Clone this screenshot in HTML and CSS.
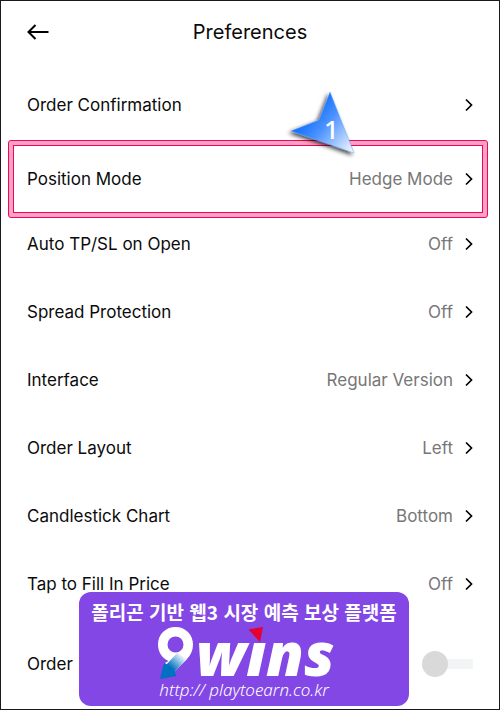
FILE: index.html
```html
<!DOCTYPE html>
<html lang="en">
<head>
<meta charset="utf-8">
<meta name="viewport" content="width=device-width, initial-scale=1">
<title>Preferences</title>
<link rel="stylesheet" href="styles.css">
</head>
<body>
<svg class="defs" aria-hidden="true">
  <symbol id="chevron" viewBox="0 0 8 14"><path d="M1 1.5 6.5 7 1 12.5" fill="none" stroke="#000" stroke-width="1.7"/></symbol>
</svg>
<main class="screen">
  <header class="header">
    <button class="back" type="button" aria-label="Back">
      <svg width="22" height="16" viewBox="0 0 22 16"><path d="M8.500 1 1.500 8 8.500 15M1.500 8H21.500" fill="none" stroke="#000" stroke-width="2"/></svg>
    </button>
    <h1 class="title">Preferences</h1>
  </header>
  <div class="list">
    <button class="row" type="button"><span>Order Confirmation</span><span class="value"></span><svg class="chevron"><use href="#chevron"/></svg></button>
    <div class="highlight">
      <button class="row" type="button"><span>Position Mode</span><span class="value">Hedge Mode</span><svg class="chevron"><use href="#chevron"/></svg></button>
      <svg class="marker" width="76" height="74" viewBox="0 0 76 74" role="img" aria-label="Step 1">
        <defs>
          <linearGradient id="blue" gradientUnits="userSpaceOnUse" x1="24" y1="26" x2="71" y2="67">
            <stop offset="0" stop-color="#0f6cff"/><stop offset=".35" stop-color="#4a92ff"/><stop offset="1" stop-color="#fff"/>
          </linearGradient>
          <filter id="shade" x="-20%" y="-20%" width="140%" height="140%"><feDropShadow dx="-2" dy="2" stdDeviation="2" flood-color="#000" flood-opacity=".75"/></filter>
        </defs>
        <path d="M46 6 70 67 7 45 35 34Z" fill="url(#blue)" stroke="#6aa5f5" stroke-width=".5" filter="url(#shade)"/>
        <text class="marker-text" x="40" y="53">1</text>
      </svg>
    </div>
    <button class="row" type="button"><span>Auto TP/SL on Open</span><span class="value">Off</span><svg class="chevron"><use href="#chevron"/></svg></button>
    <button class="row" type="button"><span>Spread Protection</span><span class="value">Off</span><svg class="chevron"><use href="#chevron"/></svg></button>
    <button class="row" type="button"><span>Interface</span><span class="value">Regular Version</span><svg class="chevron"><use href="#chevron"/></svg></button>
    <button class="row" type="button"><span>Order Layout</span><span class="value">Left</span><svg class="chevron"><use href="#chevron"/></svg></button>
    <button class="row" type="button"><span>Candlestick Chart</span><span class="value">Bottom</span><svg class="chevron"><use href="#chevron"/></svg></button>
    <button class="row" type="button"><span>Tap to Fill In Price</span><span class="value">Off</span><svg class="chevron"><use href="#chevron"/></svg></button>
    <div class="row row-toggle"><label for="order">Order</label><input class="toggle" id="order" type="checkbox"></div>
  </div>
  <a class="banner" href="http://playtoearn.co.kr" lang="ko">
    <span class="banner-title">폴리곤 기반 웹3 시장 예측 보상 플랫폼</span>
    <svg class="logo" width="180" height="56" viewBox="0 0 180 56" role="img" aria-label="9wins">
      <defs>
        <linearGradient id="tail" gradientUnits="userSpaceOnUse" x1="28" y1="29" x2="16" y2="42">
          <stop offset="0" stop-color="#fff"/><stop offset="1" stop-color="#0070c0"/>
        </linearGradient>
      </defs>
      <path fill-rule="evenodd" d="M21.500 2C31.500 2 39 9.500 39 19.500C39 25 37 30 33 34L21 46 11 38 14.500 36C8 33 4 27 4 19.500C4 9.500 11.500 2 21.500 2ZM21.500 11.500A8 8 0 1 0 21.500 27.500A8 8 0 1 0 21.500 11.500Z" fill="#fff"/>
      <path d="M23 28 33 34 20.500 46.500 22.500 51 6 54 10 38 12.500 39.500Z" fill="url(#tail)"/>
      <text class="logo-text" x="42" y="51">wins</text>
      <path d="M88 -2H116V16.500H88Z" fill="#8247e5"/>
      <path d="M94.500 4.500 109 2 106 17Z" fill="#e6002d"/>
    </svg>
    <span class="banner-url">http:// playtoearn.co.kr</span>
  </a>
</main>
</body>
</html>
```

FILE: styles.css
```css
* { box-sizing: border-box; }

body {
  margin: 0;
  background: #fff;
  color: #0b0b0b;
  font-family: Inter, "Liberation Sans", sans-serif;
  font-size: 17px;
  line-height: 24px;
}

.defs {
  position: absolute;
  width: 0;
  height: 0;
}

.screen {
  position: relative;
  min-height: 100vh;
  border: 1px solid #1b1822;
}

.header {
  display: grid;
  grid-template-columns: 24px 1fr 24px;
  align-items: center;
  height: 61px;
  padding: 0 26px;
}

button {
  border: 0;
  background: none;
  color: inherit;
  font: inherit;
}

.back {
  display: flex;
  padding: 0;
}

.title {
  margin: 0;
  font-size: 20px;
  font-weight: 400;
  text-align: center;
}

.list { padding-top: 9px; }

.row {
  display: flex;
  align-items: center;
  gap: 12px;
  width: 100%;
  height: 68px;
  padding: 0 26px;
  text-align: left;
}

.value {
  flex: 1;
  color: #777;
  text-align: right;
}

.chevron {
  width: 8px;
  height: 14px;
}

.highlight {
  position: relative;
  margin: 1px 11px -8px 7px;
  padding: 4px;
  border: 1px solid #f8005c;
  border-radius: 3px;
  background: #ffa3c4;
}

.highlight .row {
  padding: 0 9px 0 13px;
  border: 1px solid #f8005c;
  background: #fff;
}

.marker {
  position: absolute;
  right: 127px;
  top: -55px;
}

.marker-text {
  fill: #fff;
  font: 500 26px "Noto Sans", sans-serif;
}

.row-toggle {
  justify-content: space-between;
  height: 91px;
}

.toggle {
  appearance: none;
  display: flex;
  align-items: center;
  width: 51px;
  height: 26px;
  margin: 0;
  background: linear-gradient(#f3f4f6, #f3f4f6) right center / 38px 10px no-repeat;
  border-radius: 5px;
}

.toggle::before {
  content: "";
  width: 26px;
  height: 26px;
  border-radius: 50%;
  background: #d9d9d9;
}

.toggle:checked::before { margin-left: auto; }

.banner {
  position: absolute;
  left: 78px;
  bottom: 3px;
  display: flex;
  flex-direction: column;
  align-items: center;
  width: 330px;
  height: 114px;
  padding-top: 7px;
  border-radius: 12px;
  background: #8247e5;
  color: #fff;
  text-decoration: none;
  white-space: nowrap;
}

.banner-title {
  font: 700 19px/26px "Noto Sans CJK KR", sans-serif;
}

.logo { overflow: visible; }

.logo-text {
  fill: #fff;
  font: italic 900 61px "Noto Sans", sans-serif;
}

.banner-url {
  font: italic 300 17px/18px "Noto Sans", sans-serif;
}
```
